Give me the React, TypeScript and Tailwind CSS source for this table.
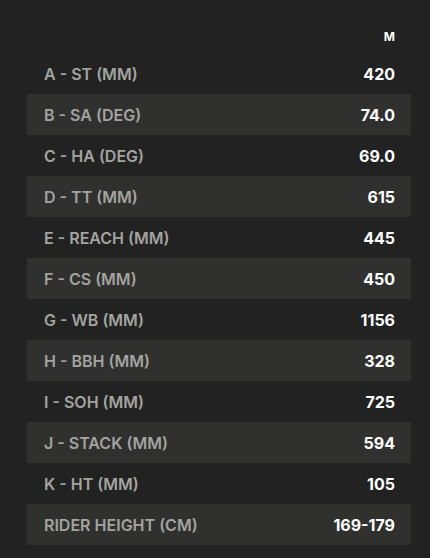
import React from "react";

const rows: [string, string][] = [
    ["A - ST (MM)", "420"],
    ["B - SA (DEG)", "74.0"],
    ["C - HA (DEG)", "69.0"],
    ["D - TT (MM)", "615"],
    ["E - REACH (MM)", "445"],
    ["F - CS (MM)", "450"],
    ["G - WB (MM)", "1156"],
    ["H - BBH (MM)", "328"],
    ["I - SOH (MM)", "725"],
    ["J - STACK (MM)", "594"],
    ["K - HT (MM)", "105"],
    ["RIDER HEIGHT (CM)", "169-179"],
];

export default function App() {
    return (
        <div className="w-[430px] h-[558px] bg-[#222222] pt-[20px] pl-[27px] font-['Inter','Noto_Sans',sans-serif]">
            <div className="w-[384px]">
                <div className="h-[33px] flex items-center justify-end pr-[16px] text-[12px] font-bold text-white">
                    M
                </div>
                {rows.map(([label, value], i) => (
                    <div
                        key={label}
                        className={`h-[41px] flex items-center justify-between pl-[17px] pr-[16px] ${i % 2 === 1 ? "bg-[#30302e]" : ""}`}
                    >
                        <span className="text-[16px] font-semibold text-[#a3a3a0] pt-[1px]">{label}</span>
                        <span className="text-[16px] font-bold text-white pt-[1px]">{value}</span>
                    </div>
                ))}
            </div>
        </div>
    );
}
